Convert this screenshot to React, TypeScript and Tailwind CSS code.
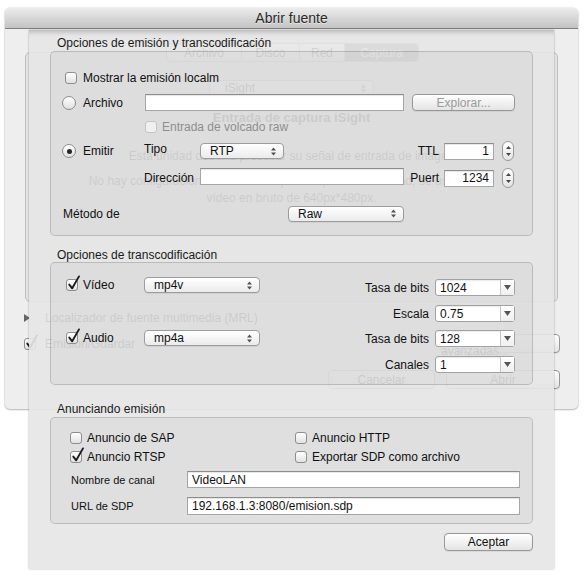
import React from "react";

function CheckBox({ checked = false, disabled = false }: { checked?: boolean; disabled?: boolean }) {
  return (
    <span
      className={`relative block h-[12px] w-[12px] shrink-0 rounded-[3px] border ${
        disabled
          ? "border-[#c4c4c4] bg-[#f0f0f0]"
          : "border-[#8e8e8e] bg-gradient-to-b from-white to-[#e2e2e2]"
      }`}
    >
      {checked && (
        <svg className="absolute left-[0px] top-[-5px]" width="14" height="16" viewBox="0 0 14 16">
          <path
            d="M2.3 9.6 L5.2 13.3 L12 1.4"
            fill="none"
            stroke="#1c1c1c"
            strokeWidth="1.9"
            strokeLinecap="round"
            strokeLinejoin="round"
          />
        </svg>
      )}
    </span>
  );
}

function Radio({ on = false }: { on?: boolean }) {
  return (
    <span className="flex h-[14px] w-[14px] shrink-0 items-center justify-center rounded-full border border-[#8b8b8b] bg-gradient-to-b from-white to-[#e0e0e0]">
      {on && <span className="block h-[5px] w-[5px] rounded-full bg-[#262626]" />}
    </span>
  );
}

function Field({ value = "", className = "", right = false }: { value?: string; className?: string; right?: boolean }) {
  return (
    <div
      className={`flex shrink-0 items-center border border-[#a6a6a6] border-t-[#8c8c8c] bg-white px-[4px] text-[12px] leading-[14px] text-[#111] shadow-[inset_0_1px_1px_rgba(0,0,0,0.1)] ${
        right ? "justify-end" : ""
      } ${className}`}
    >
      {value}
    </div>
  );
}

function UpDown() {
  return (
    <svg className="ml-auto shrink-0" width="5" height="9" viewBox="0 0 5 9">
      <path d="M2.5 0.5 L5 3.5 H0 Z M2.5 8.5 L5 5.5 H0 Z" fill="#505050" />
    </svg>
  );
}

function Popup({ label, className = "" }: { label: string; className?: string }) {
  return (
    <div
      className={`flex h-[16px] shrink-0 items-center rounded-[4px] border border-[#9c9c9c] bg-gradient-to-b from-white to-[#ebebeb] pl-[9px] pr-[7px] text-[12px] leading-[14px] text-[#111] shadow-[0_1px_0_rgba(0,0,0,0.06)] ${className}`}
    >
      <span>{label}</span>
      <UpDown />
    </div>
  );
}

function Combo({ value }: { value: string }) {
  return (
    <div className="ml-[6px] flex h-[17px] w-[80px] shrink-0 rounded-[3px] border border-[#a2a2a2] bg-white shadow-[inset_0_1px_1px_rgba(0,0,0,0.08)]">
      <div className="flex flex-1 items-center pl-[4px] text-[12px] leading-[14px] text-[#111]">{value}</div>
      <div className="flex w-[14px] items-center justify-center border-l border-[#c6c6c6] bg-gradient-to-b from-white to-[#efefef]">
        <svg width="7" height="5" viewBox="0 0 7 5">
          <path d="M0 0 H7 L3.5 5 Z" fill="#555" />
        </svg>
      </div>
    </div>
  );
}

function Stepper() {
  return (
    <div className="ml-[8px] flex h-[20px] w-[12px] shrink-0 flex-col items-center justify-center gap-[4px] rounded-[6px] border border-[#999] bg-gradient-to-b from-white to-[#e4e4e4]">
      <svg width="5" height="3" viewBox="0 0 5 3">
        <path d="M2.5 0 L5 3 H0 Z" fill="#444" />
      </svg>
      <svg width="5" height="3" viewBox="0 0 5 3">
        <path d="M0 0 H5 L2.5 3 Z" fill="#444" />
      </svg>
    </div>
  );
}

function Btn({ label, className = "", disabled = false }: { label: string; className?: string; disabled?: boolean }) {
  return (
    <div
      className={`flex shrink-0 items-center justify-center rounded-[4px] border border-[#979797] bg-gradient-to-b from-white to-[#e4e4e4] text-[12px] leading-[14px] shadow-[0_1px_0_rgba(0,0,0,0.06)] ${
        disabled ? "text-[#9a9a9a]" : "text-[#111]"
      } ${className}`}
    >
      {label}
    </div>
  );
}

function SectionLabel({ text, className = "" }: { text: string; className?: string }) {
  return <div className={`h-[14px] pl-[7px] text-[12px] leading-[14px] text-[#1a1a1a] ${className}`}>{text}</div>;
}

const groupCls = "shrink-0 rounded-[5px] border border-[rgba(0,0,0,0.16)] bg-[rgba(0,0,0,0.035)]";

export default function App() {
  return (
    <div className="relative h-[576px] w-[585px] overflow-hidden bg-white pl-[5px] pt-[8px] font-['Liberation_Sans',Arial,sans-serif] text-[#111]">
      {/* background window */}
      <div className="flex h-[401px] w-[573px] flex-col overflow-hidden rounded-[5px] bg-[#eeeeee] shadow-[0_0_0_1px_rgba(0,0,0,0.05),0_1px_2px_rgba(0,0,0,0.25)]">
        <div className="flex h-[21px] shrink-0 items-center justify-center border-b border-[#808080] bg-gradient-to-b from-[#ececec] to-[#c3c3c3] text-[14px] leading-[16px] text-[#2a2a2a] [text-shadow:0_1px_0_rgba(255,255,255,0.5)]">
          Abrir fuente
        </div>
        <div className="flex flex-1 flex-col px-[20px]">
          <div className="relative mt-[23px] flex h-[250px] w-[533px] shrink-0 flex-col items-center rounded-[5px] border border-[#bebebe] bg-[#e4e4e4]">
            <div className="absolute left-[140px] top-[-10px] flex h-[19px] overflow-hidden rounded-[4px] border border-[#999] bg-gradient-to-b from-white to-[#e6e6e6] text-[12px]">
              <div className="flex w-[75px] items-center justify-center border-r border-[#aaa]">Archivo</div>
              <div className="flex w-[58px] items-center justify-center border-r border-[#aaa]">Disco</div>
              <div className="flex w-[45px] items-center justify-center border-r border-[#aaa]">Red</div>
              <div className="flex w-[73px] items-center justify-center bg-[#6b6b6b] text-white">Captura</div>
            </div>
            <Popup label="iSight" className="mt-[27px] w-[165px] pl-[15px]" />
            <div className="mt-[15px] h-[14px] text-[13px] font-bold leading-[14px]">Entrada de captura iSight</div>
            <div className="mt-[24px] h-[14px] text-[12px] leading-[14px]">Esta unidad debería procesar su señal de entrada de imagen</div>
            <div className="mt-[11px] h-[14px] text-[12px] leading-[14px]">No hay configuración de formato disponible para esta unidad, se usará el de</div>
            <div className="mt-[3px] h-[14px] text-[12px] leading-[14px]">vídeo en bruto de 640px*480px.</div>
          </div>
          <div className="ml-[-1px] mt-[9px] flex h-[14px] items-center text-[12px]">
            <svg width="6" height="8" viewBox="0 0 6 8">
              <path d="M0 0 L6 4 L0 8 Z" fill="#666" />
            </svg>
            <span className="ml-[15px]">Localizador de fuente multimedia (MRL)</span>
          </div>
          <div className="ml-[-1px] mr-[-2px] mt-[9px] flex h-[19px] items-center text-[12px]">
            <CheckBox checked />
            <span className="ml-[9px]">Emisión/Guardar</span>
            <Btn label="Opciones avanzadas..." className="ml-auto h-[19px] w-[120px]" />
          </div>
          <div className="mr-[-2px] mt-[17px] flex h-[19px] justify-end gap-[11px]">
            <Btn label="Cancelar" className="h-[19px] w-[107px]" />
            <Btn label="Abrir" className="h-[19px] w-[114px]" />
          </div>
        </div>
      </div>

      {/* sheet */}
      <div className="absolute left-[29px] top-[30px] flex h-[539px] w-[525px] flex-col bg-[rgba(230,230,230,0.91)] px-[21px] pt-[6px] shadow-[0_0_2px_rgba(0,0,0,0.3),inset_0_6px_5px_-4px_rgba(0,0,0,0.22)]">
        <SectionLabel text="Opciones de emisión y transcodificación" />
        <div className={`mt-[1px] flex h-[185px] flex-col text-[12px] leading-[14px] ${groupCls}`}>
          <div className="mt-[18px] flex h-[16px] items-center pl-[14px]">
            <CheckBox />
            <span className="ml-[6px]">Mostrar la emisión localm</span>
          </div>
          <div className="mt-[8px] flex h-[17px] items-center pl-[11px]">
            <div className="flex w-[83px] items-center">
              <Radio />
              <span className="ml-[7px]">Archivo</span>
            </div>
            <Field className="h-[17px] w-[259px]" />
            <Btn label="Explorar..." disabled className="ml-[8px] h-[17px] w-[103px]" />
          </div>
          <div className="mt-[9px] flex h-[14px] items-center pl-[94px]">
            <CheckBox disabled />
            <span className="ml-[5px] text-[#8e8e8e]">Entrada de volcado raw</span>
          </div>
          <div className="mt-[8px] flex h-[18px] items-center pl-[11px] pr-[18px]">
            <div className="flex w-[82px] items-center">
              <Radio on />
              <span className="ml-[7px]">Emitir</span>
            </div>
            <span className="mb-[4px] w-[56px]">Tipo</span>
            <Popup label="RTP" className="w-[84px]" />
            <div className="flex-1" />
            <span className="mr-[5px]">TTL</span>
            <Field value="1" right className="h-[17px] w-[50px]" />
            <Stepper />
          </div>
          <div className="mt-[8px] flex h-[20px] items-center pl-[93px] pr-[18px]">
            <span className="w-[56px]">Dirección</span>
            <Field className="mb-[4px] h-[17px] w-[204px]" />
            <div className="flex-1" />
            <span className="mr-[5px]">Puert</span>
            <Field value="1234" right className="h-[17px] w-[50px]" />
            <Stepper />
          </div>
          <div className="mt-[17px] flex h-[17px] items-center pl-[12px]">
            <span className="w-[225px]">Método de</span>
            <Popup label="Raw" className="w-[116px]" />
          </div>
        </div>

        <SectionLabel text="Opciones de transcodificación" className="mt-[12px]" />
        <div className={`flex h-[123px] text-[12px] leading-[14px] ${groupCls}`}>
          <div className="flex w-[230px] flex-col pl-[15px]">
            <div className="mt-[14px] flex h-[16px] items-center">
              <div className="flex w-[78px] items-center">
                <CheckBox checked />
                <span className="ml-[5px]">Vídeo</span>
              </div>
              <Popup label="mp4v" className="w-[116px]" />
            </div>
            <div className="mt-[37px] flex h-[16px] items-center">
              <div className="flex w-[78px] items-center">
                <CheckBox checked />
                <span className="ml-[5px]">Audio</span>
              </div>
              <Popup label="mp4a" className="w-[116px]" />
            </div>
          </div>
          <div className="ml-auto flex flex-col items-end pr-[17px]">
            <div className="mt-[16px] flex h-[17px] items-center">
              <span>Tasa de bits</span>
              <Combo value="1024" />
            </div>
            <div className="mt-[9px] flex h-[17px] items-center">
              <span>Escala</span>
              <Combo value="0.75" />
            </div>
            <div className="mt-[8px] flex h-[17px] items-center">
              <span>Tasa de bits</span>
              <Combo value="128" />
            </div>
            <div className="mt-[9px] flex h-[17px] items-center">
              <span>Canales</span>
              <Combo value="1" />
            </div>
          </div>
        </div>

        <SectionLabel text="Anunciando emisión" className="mt-[17px]" />
        <div className={`mt-[1px] flex h-[107px] flex-col text-[12px] leading-[14px] ${groupCls}`}>
          <div className="mt-[13px] flex h-[14px] items-center pl-[19px]">
            <div className="flex w-[225px] items-center">
              <CheckBox />
              <span className="ml-[5px]">Anuncio de SAP</span>
            </div>
            <CheckBox />
            <span className="ml-[5px]">Anuncio HTTP</span>
          </div>
          <div className="mt-[5px] flex h-[14px] items-center pl-[19px]">
            <div className="flex w-[225px] items-center">
              <CheckBox checked />
              <span className="ml-[5px]">Anuncio RTSP</span>
            </div>
            <CheckBox />
            <span className="ml-[5px]">Exportar SDP como archivo</span>
          </div>
          <div className="mt-[7px] flex h-[17px] items-center pl-[20px]">
            <span className="w-[116px] text-[11px]">Nombre de canal</span>
            <Field value="VideoLAN" className="h-[17px] w-[333px]" />
          </div>
          <div className="mt-[9px] flex h-[18px] items-center pl-[20px]">
            <span className="w-[116px] text-[11px]">URL de SDP</span>
            <Field value="192.168.1.3:8080/emision.sdp" className="h-[18px] w-[333px]" />
          </div>
        </div>

        <div className="mt-[9px] flex justify-end">
          <Btn label="Aceptar" className="h-[18px] w-[89px]" />
        </div>
      </div>
    </div>
  );
}
